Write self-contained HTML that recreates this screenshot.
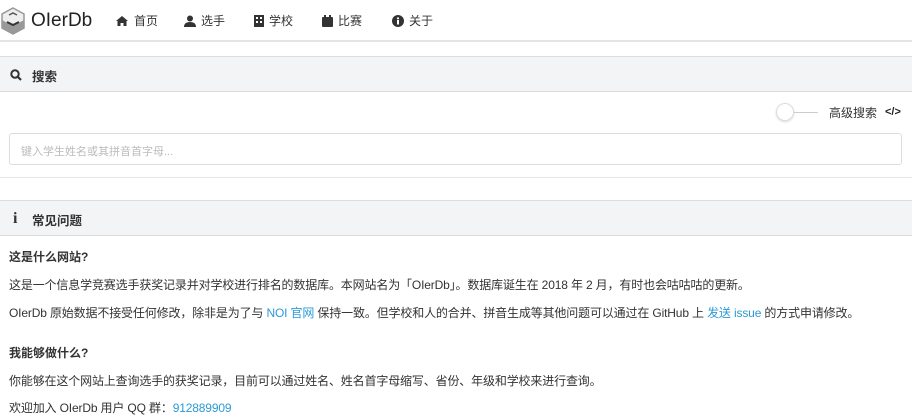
<!DOCTYPE html>
<html><head><meta charset="utf-8">
<style>
*{box-sizing:border-box;margin:0;padding:0}
body{width:912px;height:404px;overflow:hidden;background:#fff;font-family:"Liberation Sans","Noto Sans CJK SC",sans-serif;color:#333;font-size:12px}
.nav{position:absolute;left:0;top:0;width:912px;height:42px;border-bottom:2px solid #e4e4e4;background:#fff}
.logo{position:absolute;left:0;top:6px}
.brand{position:absolute;left:31px;top:10px;font-size:19px;color:#222}
.item{position:absolute;top:12px;font-size:12px;color:#333;display:flex;align-items:center;gap:5px}
.hdr{position:absolute;left:0;width:912px;height:36px;background:#f3f4f5;border-top:1px solid #dcdcdc;border-bottom:1px solid #dcdcdc;font-weight:bold;font-size:12.5px;color:#333}
.hdr span{position:absolute;left:32px;top:9px}
.inp{position:absolute;left:9px;top:133px;width:893px;height:32px;border:1px solid #ddd;border-radius:3px;color:#bbb;font-size:11px;padding:9px 0 0 11px}
.line{position:absolute;left:0;width:912px;height:1px;background:#e6e6e6}
p{position:absolute;left:9px;font-size:12px;white-space:nowrap;letter-spacing:-0.15px}
b{position:absolute;left:9px;font-size:12px}
a{color:#2b9ad6;text-decoration:none}
</style></head><body>
<div class="nav">
<svg class="logo" width="26" height="30" viewBox="0 0 26 30"><path d="M13 2 L24 8 L24 22 L13 28 L2 22 L2 8Z" fill="#eee" stroke="#999" stroke-width="1.5"/><path d="M2 14 L13 20 L24 14 L24 22 L13 28 L2 22Z" fill="#999"/><path d="M7 16 L13 19 L19 16" stroke="#333" stroke-width="2" fill="none"/><path d="M9 9 L13 7 L17 9" stroke="#555" stroke-width="1.5" fill="none"/></svg>
<div class="brand">OIerDb</div>
<div class="item" style="left:115px"><svg width="14" height="12" viewBox="0 0 14 12"><path d="M7 1 L13 6 L11.5 6 L11.5 11 L8.5 11 L8.5 8 L5.5 8 L5.5 11 L2.5 11 L2.5 6 L1 6Z" fill="#333"/></svg>首页</div>
<div class="item" style="left:184px"><svg width="12" height="12" viewBox="0 0 12 12"><circle cx="6" cy="3.5" r="3" fill="#333"/><path d="M0 12 Q0 7 6 7 Q12 7 12 12Z" fill="#333"/></svg>选手</div>
<div class="item" style="left:254px"><svg width="10" height="12" viewBox="0 0 10 12"><rect x="0" y="0" width="10" height="12" fill="#333"/><rect x="2" y="2" width="2" height="2" fill="#fff"/><rect x="6" y="2" width="2" height="2" fill="#fff"/><rect x="2" y="6" width="2" height="2" fill="#fff"/><rect x="6" y="6" width="2" height="2" fill="#fff"/></svg>学校</div>
<div class="item" style="left:322px"><svg width="11" height="12" viewBox="0 0 11 12"><rect x="0" y="2" width="11" height="10" rx="1" fill="#333"/><rect x="2" y="0" width="2" height="3" fill="#333"/><rect x="7" y="0" width="2" height="3" fill="#333"/></svg>比赛</div>
<div class="item" style="left:392px"><svg width="12" height="12" viewBox="0 0 12 12"><circle cx="6" cy="6" r="6" fill="#333"/><rect x="5" y="5" width="2" height="4.5" fill="#fff"/><circle cx="6" cy="3.3" r="1.1" fill="#fff"/></svg>关于</div>
</div>

<div class="hdr" style="top:56px"><svg style="position:absolute;left:10px;top:12px" width="12" height="12" viewBox="0 0 12 12"><circle cx="5" cy="5" r="3.7" stroke="#333" stroke-width="2" fill="none"/><path d="M7.5 7.5 L11 11" stroke="#333" stroke-width="2.2"/></svg><span>搜索</span></div>

<div style="position:absolute;left:776px;top:103px;width:18px;height:18px;border-radius:50%;border:1px solid #ddd;background:#fff;box-shadow:0 1px 2px rgba(0,0,0,.15)"></div>
<div style="position:absolute;left:794px;top:112px;width:24px;height:1px;background:#ccc"></div>
<div style="position:absolute;left:829px;top:104px;font-size:12px;color:#333">高级搜索</div>
<div style="position:absolute;left:885px;top:106px;font-size:11px;font-weight:bold;color:#222">&lt;/&gt;</div>

<div class="inp">键入学生姓名或其拼音首字母...</div>
<div class="line" style="top:177px"></div>

<div class="hdr" style="top:200px"><span style="left:13px;font-family:'Liberation Serif',serif;font-size:16px;top:9px">i</span><span>常见问题</span></div>

<b style="top:248px">这是什么网站?</b>
<p style="top:276px">这是一个信息学竞赛选手获奖记录并对学校进行排名的数据库。本网站名为「OIerDb」。数据库诞生在 2018 年 2 月，有时也会咕咕咕的更新。</p>
<p style="top:304px">OIerDb 原始数据不接受任何修改，除非是为了与 <a>NOI 官网</a> 保持一致。但学校和人的合并、拼音生成等其他问题可以通过在 GitHub 上 <a>发送 issue</a> 的方式申请修改。</p>
<b style="top:344px">我能够做什么?</b>
<p style="top:372px">你能够在这个网站上查询选手的获奖记录，目前可以通过姓名、姓名首字母缩写、省份、年级和学校来进行查询。</p>
<p style="top:399px">欢迎加入 OIerDb 用户 QQ 群：<a>912889909</a></p>
</body></html>
